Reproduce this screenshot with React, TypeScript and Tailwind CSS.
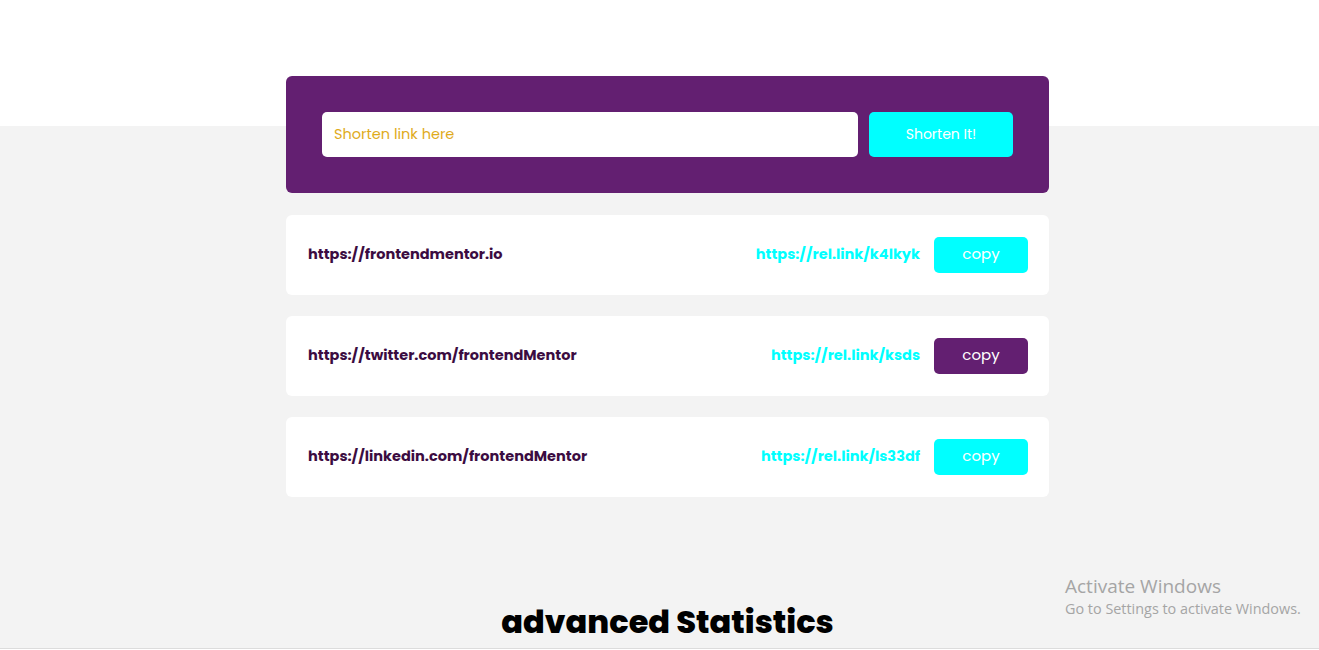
import React from "react";

const links = [
  { orig: "https://frontendmentor.io", short: "https://rel.link/k4lkyk", active: false },
  { orig: "https://twitter.com/frontendMentor", short: "https://rel.link/ksds", active: true },
  { orig: "https://linkedin.com/frontendMentor", short: "https://rel.link/ls33df", active: false },
];

export default function App() {
  return (
    <div className="relative min-h-[650px] w-full overflow-hidden bg-white" style={{ fontFamily: "Poppins, 'Noto Sans', 'Open Sans', sans-serif" }}>
      <div className="h-[126px] bg-white" />
      <div className="flex h-[523px] flex-col border-b border-[#dcdcdc] bg-[#f3f3f3]">
        <div className="mx-auto -mt-[50px] w-[763px] translate-x-[8px]">
          <div className="flex h-[117px] items-center gap-[11px] rounded-[6px] bg-[#631f71] px-[36px]">
            <div className="flex h-[45px] flex-1 items-center rounded-[5px] bg-white px-[12px] text-[14.5px] text-[#e0ab1b]">
              Shorten link here
            </div>
            <button className="h-[45px] w-[144px] rounded-[5px] bg-[#00ffff] text-[14px] text-white">Shorten It!</button>
          </div>
          <div className="mt-[22px] flex flex-col gap-[21px]">
            {links.map((l) => (
              <div key={l.orig} className="flex h-[80px] items-center rounded-[6px] bg-white pl-[22px] pr-[21px]">
                <span className="flex-1 text-[14.5px] font-bold text-[#3b0c41]">{l.orig}</span>
                <span className="mr-[14px] text-[14.5px] font-bold text-[#00ffff]">{l.short}</span>
                <button className={`-mt-px h-[36px] w-[94px] rounded-[5px] text-[15px] text-white ${l.active ? "bg-[#631f71]" : "bg-[#00ffff]"}`}>copy</button>
              </div>
            ))}
          </div>
          <h2 className="mt-[105px] text-center text-[32px] font-extrabold leading-[40px] text-black">advanced Statistics</h2>
        </div>
      </div>
      <div className="absolute left-[1065px] top-[574px] text-[#a5a5a5]" style={{ fontFamily: "'Open Sans', sans-serif" }}>
        <div className="text-[19px] leading-[25px]">Activate Windows</div>
        <div className="text-[14.4px] leading-[20px]">Go to Settings to activate Windows.</div>
      </div>
    </div>
  );
}
